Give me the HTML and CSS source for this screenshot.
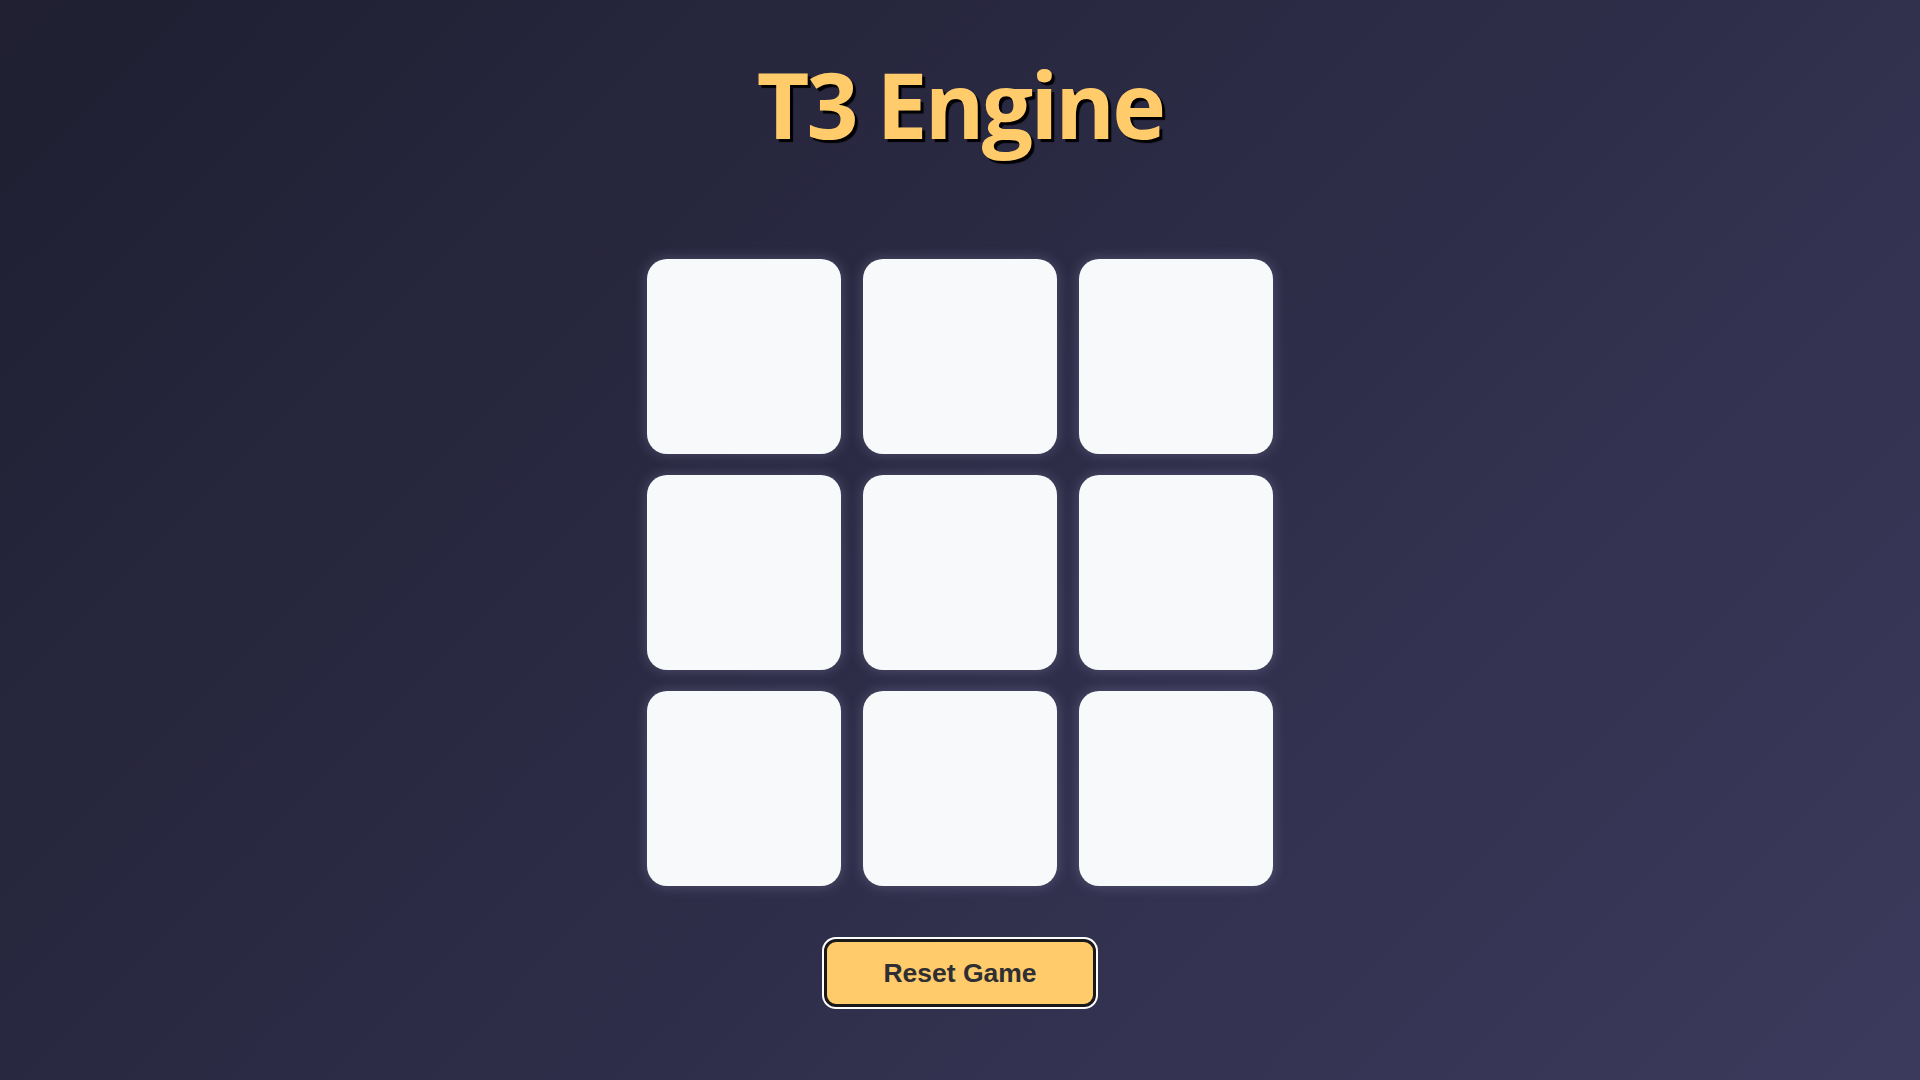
FILE: index.html
```html
<!DOCTYPE html>
<html lang="en">
<head>
<meta charset="utf-8">
<title>T3 Engine</title>
<link rel="stylesheet" href="styles.css">
</head>
<body>
  <main class="app">
    <h1 class="title">T3 Engine</h1>
    <div class="board">
      <div class="cell"></div>
      <div class="cell"></div>
      <div class="cell"></div>
      <div class="cell"></div>
      <div class="cell"></div>
      <div class="cell"></div>
      <div class="cell"></div>
      <div class="cell"></div>
      <div class="cell"></div>
    </div>
    <button class="reset">Reset Game</button>
  </main>
</body>
</html>
```

FILE: styles.css
```css
html, body {
  margin: 0;
  padding: 0;
  height: 100%;
}

body {
  background: linear-gradient(135deg, #1f1f31 0%, #2d2c47 50%, #3b3a5c 100%);
  font-family: "Open Sans", "Noto Sans", sans-serif;
  overflow: hidden;
}

.app {
  display: flex;
  flex-direction: column;
  align-items: center;
  padding-top: 59px;
}

.title {
  margin: 0;
  font-size: 91px;
  line-height: 1;
  font-weight: 700;
  color: #ffcb6b;
  text-shadow: 3px 3px 1px #000;
  letter-spacing: -2.8px;
}

.board {
  margin-top: 109px;
  display: grid;
  grid-template-columns: repeat(3, 194px);
  grid-template-rows: repeat(3, 195px);
  column-gap: 22px;
  row-gap: 21px;
}

.cell {
  background: #f8f9fb;
  border-radius: 20px;
  box-shadow: 0 0 14px rgba(200, 200, 240, 0.25);
}

.reset {
  margin-top: 53px;
  width: 272px;
  height: 68px;
  background: #ffcb6b;
  border: 3px solid #1a1a1a;
  border-radius: 12px;
  box-shadow: 0 0 0 2px #ffffff;
  font-family: "Liberation Sans", Arial, sans-serif;
  font-weight: 700;
  font-size: 26.5px;
  color: #2e2e33;
  cursor: pointer;
  padding: 0;
}
```
